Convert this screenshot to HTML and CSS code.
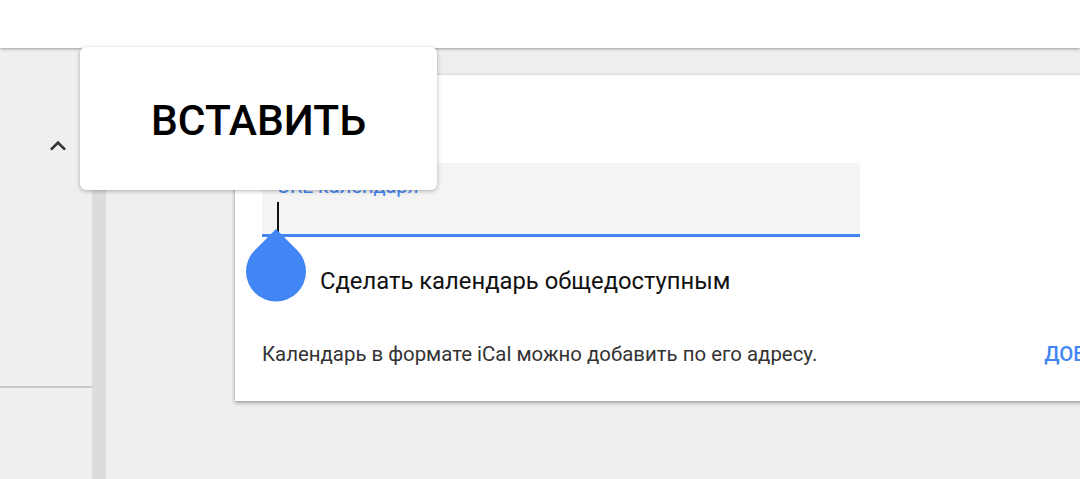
FILE: index.html
```html
<!DOCTYPE html>
<html lang="ru">
<head>
<meta charset="utf-8">
<link rel="stylesheet" href="styles.css">
</head>
<body>
<header class="topbar"></header>
<div class="layout">
  <aside class="sidebar">
    <div class="sidebar-top">
      <svg class="chevron" viewBox="0 0 24 24" width="32" height="32"><path d="M12 8l-6 6 1.41 1.41L12 10.83l4.59 4.58L18 14z" fill="#333"/></svg>
    </div>
    <div class="sidebar-rule"></div>
  </aside>
  <div class="scrolltrack"></div>
  <main class="main">
    <section class="card">
      <div class="field">
        <span class="field-label">URL календаря</span>
        <span class="caret"></span>
      </div>
      <div class="toggle-row">
        <span class="toggle-text">Сделать календарь общедоступным</span>
      </div>
      <div class="footer-row">
        <span class="hint">Календарь в формате iCal можно добавить по его адресу.</span>
        <span class="action">ДОБАВИТЬ</span>
      </div>
    </section>
  </main>
</div>
<div class="paste-popup"><span class="paste-text">ВСТАВИТЬ</span></div>
<svg class="handle" viewBox="0 0 60 73" width="60" height="73"><path d="M30 0 L51.21 21.21 A30 30 0 1 1 8.79 21.21 Z" fill="#4285f4"/></svg>
</body>
</html>
```

FILE: styles.css
```css
* { box-sizing: border-box; }
html, body {
  margin: 0;
  padding: 0;
  width: 1080px;
  height: 479px;
  overflow: hidden;
  font-family: Roboto, "Noto Sans", Arial, sans-serif;
  background: #eeeeee;
}
.topbar {
  height: 48px;
  background: #ffffff;
  box-shadow: 0 1px 3px rgba(0,0,0,0.35);
  position: relative;
  z-index: 2;
}
.layout {
  display: flex;
  height: 431px;
}
.sidebar {
  width: 92px;
  background: #efefef;
  display: flex;
  flex-direction: column;
}
.sidebar-top {
  height: 338px;
  padding: 82px 0 0 42px;
}
.chevron { display: block; }
.sidebar-rule {
  height: 2px;
  background: #c9c9c9;
}
.scrolltrack {
  width: 14px;
  background: #dcdcdc;
}
.main {
  flex: 1;
  padding: 27px 0 0 129px;
  overflow: hidden;
  background: #eeeeee;
}
.card {
  width: 960px;
  height: 326px;
  background: #ffffff;
  box-shadow: 0 2px 4px rgba(0,0,0,0.3), 0 0 3px rgba(0,0,0,0.12);
  padding: 88px 0 0 27px;
}
.field {
  width: 598px;
  height: 74px;
  background: #f4f4f4;
  border-radius: 4px 4px 0 0;
  border-bottom: 3px solid #4285f4;
  padding: 11px 0 0 15px;
  display: flex;
  flex-direction: column;
}
.field-label {
  font-size: 20px;
  line-height: 24px;
  color: #4285f4;
}
.caret {
  display: block;
  width: 2px;
  height: 30px;
  margin-top: 4px;
  background: #111;
}
.toggle-row {
  height: 105px;
  padding: 30px 0 0 58px;
}
.toggle-text {
  font-size: 23.8px;
  line-height: 28px;
  color: #111;
}
.footer-row {
  display: flex;
  align-items: center;
  gap: 227px;
  white-space: nowrap;
}
.hint {
  font-size: 20.4px;
  line-height: 24px;
  color: #333;
}
.action {
  font-size: 20.4px;
  line-height: 24px;
  color: #4285f4;
  font-weight: 500;
}
.paste-popup {
  position: absolute;
  left: 80px;
  top: 47px;
  width: 357px;
  height: 143px;
  background: #ffffff;
  border-radius: 6px;
  box-shadow: 0 1px 4px rgba(0,0,0,0.3);
  display: flex;
  align-items: center;
  justify-content: center;
  padding-top: 4px;
  z-index: 5;
}
.paste-text {
  font-size: 42.5px;
  font-weight: 500;
  color: #000;
}
.handle {
  position: absolute;
  left: 246px;
  top: 229px;
  z-index: 4;
}
```
